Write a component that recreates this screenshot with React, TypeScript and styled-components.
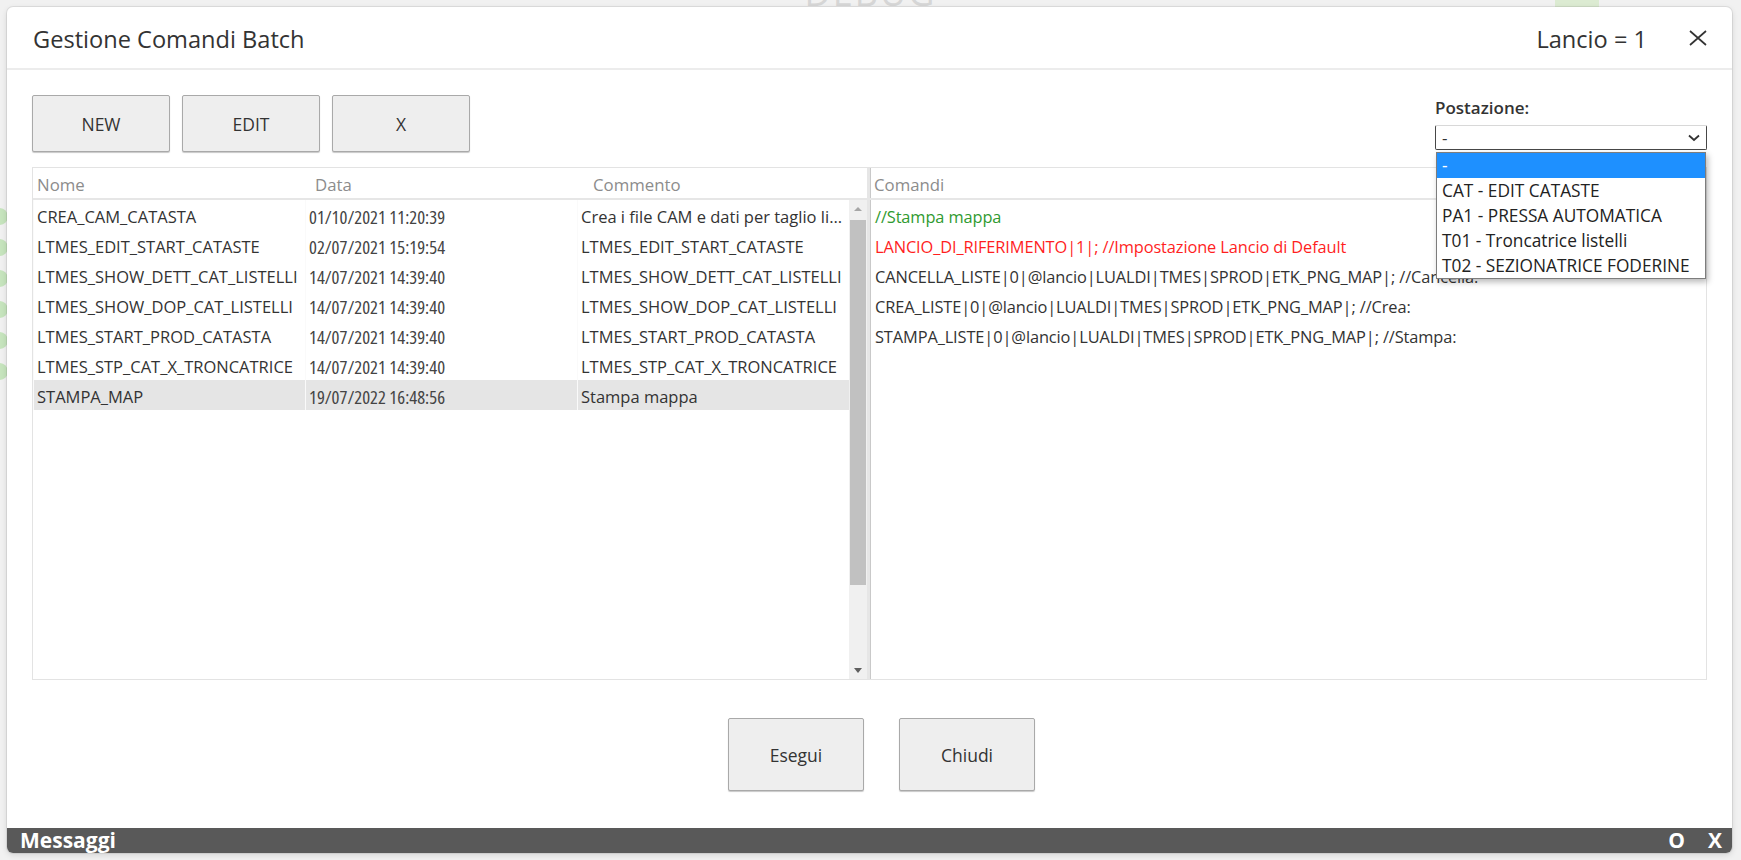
import React from 'react'
import styled, { createGlobalStyle } from 'styled-components'

const FONT = `"Open Sans", "Liberation Sans", Arial, sans-serif`

type Comando = { nome: string; data: string; commento: string }
type Riga = { testo: string; tipo: 'commento' | 'riferimento' | 'normale' }

const comandi: Comando[] = [
  { nome: 'CREA_CAM_CATASTA', data: '01/10/2021 11:20:39', commento: 'Crea i file CAM e dati per taglio listelli da catasta' },
  { nome: 'LTMES_EDIT_START_CATASTE', data: '02/07/2021 15:19:54', commento: 'LTMES_EDIT_START_CATASTE' },
  { nome: 'LTMES_SHOW_DETT_CAT_LISTELLI', data: '14/07/2021 14:39:40', commento: 'LTMES_SHOW_DETT_CAT_LISTELLI' },
  { nome: 'LTMES_SHOW_DOP_CAT_LISTELLI', data: '14/07/2021 14:39:40', commento: 'LTMES_SHOW_DOP_CAT_LISTELLI' },
  { nome: 'LTMES_START_PROD_CATASTA', data: '14/07/2021 14:39:40', commento: 'LTMES_START_PROD_CATASTA' },
  { nome: 'LTMES_STP_CAT_X_TRONCATRICE', data: '14/07/2021 14:39:40', commento: 'LTMES_STP_CAT_X_TRONCATRICE' },
  { nome: 'STAMPA_MAP', data: '19/07/2022 16:48:56', commento: 'Stampa mappa' },
]

const righe: Riga[] = [
  { testo: '//Stampa mappa', tipo: 'commento' },
  { testo: 'LANCIO_DI_RIFERIMENTO|1|; //Impostazione Lancio di Default', tipo: 'riferimento' },
  { testo: 'CANCELLA_LISTE|0|@lancio|LUALDI|TMES|SPROD|ETK_PNG_MAP|; //Cancella:', tipo: 'normale' },
  { testo: 'CREA_LISTE|0|@lancio|LUALDI|TMES|SPROD|ETK_PNG_MAP|; //Crea:', tipo: 'normale' },
  { testo: 'STAMPA_LISTE|0|@lancio|LUALDI|TMES|SPROD|ETK_PNG_MAP|; //Stampa:', tipo: 'normale' },
]

const postazioni = ['-', 'CAT - EDIT CATASTE', 'PA1 - PRESSA AUTOMATICA', 'T01 - Troncatrice listelli', 'T02 - SEZIONATRICE FODERINE']

const coloreRiga = { commento: '#2f9a2f', riferimento: '#ff1f1f', normale: '#333333' }

const App = () => {
  const selezionato = 6
  return (
    <>
      <GlobalStyle />
      <Page>
        <BackPage>
          <BackTop>
            <BackTitle>DEBUG</BackTitle>
            <BackBadge />
          </BackTop>
          <BackRail>
            {[0, 1, 2, 3, 4, 5].map((i) => (
              <BackDot key={i} />
            ))}
          </BackRail>
        </BackPage>

        <Modal>
          <Header>
            <Title>Gestione Comandi Batch</Title>
            <HeaderRight>
              <Title>Lancio = 1</Title>
              <CloseIcon width="18" height="16" viewBox="0 0 18 16">
                <path d="M1 1 L17 15 M17 1 L1 15" stroke="#333" strokeWidth="1.7" fill="none" />
              </CloseIcon>
            </HeaderRight>
          </Header>

          <Content>
            <Toolbar>
              <ButtonGroup>
                <ActionButton $w={138} $h={57}>NEW</ActionButton>
                <ActionButton $w={138} $h={57}>EDIT</ActionButton>
                <ActionButton $w={138} $h={57}>X</ActionButton>
              </ButtonGroup>
              <Postazione>
                <FieldLabel>Postazione:</FieldLabel>
                <SelectWrap>
                  <SelectBox>
                    <span>-</span>
                    <svg width="12" height="8" viewBox="0 0 12 8">
                      <path d="M1 1.5 L6 6 L11 1.5" stroke="#333" strokeWidth="1.8" fill="none" />
                    </svg>
                  </SelectBox>
                  <DropList>
                    {postazioni.map((p, i) => (
                      <DropOption key={p} $active={i === 0}>
                        {p}
                      </DropOption>
                    ))}
                  </DropList>
                </SelectWrap>
              </Postazione>
            </Toolbar>

            <Tables>
              <LeftPanel>
                <HeadRow $cols={3}>
                  <HeadCell>Nome</HeadCell>
                  <HeadCell>Data</HeadCell>
                  <HeadCell>Commento</HeadCell>
                </HeadRow>
                <ListBody>
                  <Rows>
                    {comandi.map((c, i) => (
                      <Row key={c.nome} $selected={i === selezionato}>
                        <Cell>{c.nome}</Cell>
                        <Cell $numeric>{c.data}</Cell>
                        <Cell>{c.commento}</Cell>
                      </Row>
                    ))}
                  </Rows>
                  <ScrollBar>
                    <ArrowBox>
                      <ArrowUp />
                    </ArrowBox>
                    <Thumb />
                    <ArrowBox>
                      <ArrowDown />
                    </ArrowBox>
                  </ScrollBar>
                </ListBody>
              </LeftPanel>

              <RightPanel>
                <HeadRow $cols={1}>
                  <HeadCell>Comandi</HeadCell>
                </HeadRow>
                {righe.map((r) => (
                  <CommandLine key={r.testo} $color={coloreRiga[r.tipo]}>
                    {r.testo}
                  </CommandLine>
                ))}
              </RightPanel>
            </Tables>

            <Footer>
              <ActionButton $w={136} $h={73}>Esegui</ActionButton>
              <ActionButton $w={136} $h={73}>Chiudi</ActionButton>
            </Footer>
          </Content>

          <MessageBar>
            <span>Messaggi</span>
            <MessageActions>
              <span>O</span>
              <span>X</span>
            </MessageActions>
          </MessageBar>
        </Modal>
      </Page>
    </>
  )
}

const GlobalStyle = createGlobalStyle`
  html, body {
    margin: 0;
    padding: 0;
  }
  body {
    background: #f1f1f1;
    font-family: ${FONT};
    font-weight: 400;
    color: #333;
    overflow: hidden;
  }
  * {
    box-sizing: border-box;
  }
`

const Page = styled.div`
  position: relative;
  width: 100%;
  height: 860px;
  overflow: hidden;
`

const BackPage = styled.div`
  display: flex;
  flex-direction: column;
  height: 100%;
`

const BackTop = styled.div`
  display: flex;
  justify-content: center;
  position: relative;
  height: 10px;
`

const BackTitle = styled.div`
  font-size: 36px;
  line-height: 40px;
  margin-top: -27px;
  color: #d6d6d6;
  letter-spacing: 2px;
`

const BackBadge = styled.div`
  position: absolute;
  left: 1555px;
  top: 0;
  width: 44px;
  height: 8px;
  background: #dcebd2;
`

const BackRail = styled.div`
  display: flex;
  flex-direction: column;
  gap: 14px;
  margin-top: 198px;
`

const BackDot = styled.div`
  width: 17px;
  height: 17px;
  border-radius: 50%;
  margin-left: -9px;
  background: #c6e4bd;
`

const Modal = styled.div`
  position: absolute;
  left: 7px;
  top: 7px;
  width: 1725px;
  height: 846px;
  background: #fff;
  border-radius: 6px;
  box-shadow: 0 0 0 1px rgba(0, 0, 0, 0.07), 0 2px 6px rgba(0, 0, 0, 0.12);
  display: flex;
  flex-direction: column;
`

const Header = styled.header`
  flex-shrink: 0;
  height: 63px;
  display: flex;
  align-items: center;
  justify-content: space-between;
  padding: 3px 25px 0 26px;
  border-bottom: 2px solid #ececec;
`

const Title = styled.h1`
  margin: 0;
  font-size: 23.6px;
  font-weight: 400;
  color: #333;
  white-space: nowrap;
`

const HeaderRight = styled.div`
  display: flex;
  align-items: center;
  gap: 42px;
`

const CloseIcon = styled.svg`
  display: block;
  margin-top: -2px;
`

const Content = styled.div`
  flex: 1;
  display: flex;
  flex-direction: column;
  padding: 0 25px;
`

const Toolbar = styled.div`
  display: flex;
  justify-content: space-between;
  align-items: flex-start;
  margin-top: 25px;
`

const ButtonGroup = styled.div`
  display: flex;
  gap: 12px;
`

const ActionButton = styled.button<{ $w: number; $h: number }>`
  width: ${(p) => p.$w}px;
  height: ${(p) => p.$h}px;
  padding: 0;
  background: #eeeeee;
  border: 1px solid #a9a9a9;
  border-radius: 2px;
  box-shadow: 0 1px 1px rgba(0, 0, 0, 0.22);
  font-family: inherit;
  font-weight: inherit;
  font-size: 17.5px;
  color: #333;
`

const Postazione = styled.div`
  width: 272px;
  display: flex;
  flex-direction: column;
  margin-top: 2px;
`

const FieldLabel = styled.label`
  font-size: 17px;
  line-height: 22px;
  font-weight: 600;
  color: #333;
`

const SelectWrap = styled.div`
  position: relative;
  margin-top: 6px;
`

const SelectBox = styled.div`
  height: 25px;
  display: flex;
  align-items: center;
  justify-content: space-between;
  padding: 0 6px 0 6px;
  border: 1px solid #474747;
  border-top-color: #d8d8d8;
  border-radius: 2px;
  font-size: 17px;
  color: #333;
`

const DropList = styled.div`
  position: absolute;
  top: calc(100% + 2px);
  left: 1px;
  right: 1px;
  z-index: 10;
  background: #fff;
  border: 1px solid #7d7d7d;
  box-shadow: 2px 3px 6px rgba(0, 0, 0, 0.28);
`

const DropOption = styled.div<{ $active: boolean }>`
  height: 25px;
  line-height: 25px;
  padding-left: 5px;
  font-size: 17.3px;
  white-space: nowrap;
  background: ${(p) => (p.$active ? '#1e90ff' : '#fff')};
  color: ${(p) => (p.$active ? '#fff' : '#222')};
`

const Tables = styled.div`
  margin-top: 15px;
  height: 513px;
  display: grid;
  grid-template-columns: 834px 1fr;
  border: 1px solid #e3e3e3;
  background: #fff;
`

const LeftPanel = styled.div`
  display: flex;
  flex-direction: column;
  min-height: 0;
  overflow: hidden;
`

const HeadRow = styled.div<{ $cols: number }>`
  flex-shrink: 0;
  display: grid;
  grid-template-columns: repeat(${(p) => p.$cols}, 1fr);
  height: 32px;
  border-bottom: 2px solid #e6e6e6;
`

const HeadCell = styled.div`
  padding: 4px 0 0 4px;
  line-height: 26px;
  font-size: 16.8px;
  color: #8c8c8c;
`

const ListBody = styled.div`
  flex: 1;
  display: flex;
  min-height: 0;
`

const Rows = styled.div`
  flex: 1;
  min-width: 0;
`

const Row = styled.div<{ $selected: boolean }>`
  display: grid;
  grid-template-columns: repeat(3, 1fr);
  height: 30px;
  background: ${(p) => (p.$selected ? '#e5e5e5' : 'transparent')};
`

const Cell = styled.div<{ $numeric?: boolean }>`
  border-left: 1px solid #fafafa;
  padding: 4px 4px 0 3px;
  line-height: 26px;
  font-size: ${(p) => (p.$numeric ? '18.6px' : '16.5px')};
  font-stretch: ${(p) => (p.$numeric ? 'condensed' : 'normal')};
  color: ${(p) => (p.$numeric ? '#444' : '#333')};
  white-space: nowrap;
  overflow: hidden;
  text-overflow: ellipsis;
`

const ScrollBar = styled.div`
  width: 18px;
  flex-shrink: 0;
  display: flex;
  flex-direction: column;
  background: #f0f0f0;
`

const ArrowBox = styled.div`
  height: 17px;
  display: flex;
  align-items: center;
  justify-content: center;
  &:last-child {
    margin-top: auto;
  }
`

const ArrowUp = styled.div`
  width: 0;
  height: 0;
  border-left: 4px solid transparent;
  border-right: 4px solid transparent;
  border-bottom: 4px solid #a6a6a6;
`

const ArrowDown = styled.div`
  width: 0;
  height: 0;
  border-left: 4px solid transparent;
  border-right: 4px solid transparent;
  border-top: 5px solid #5f5f5f;
`

const Thumb = styled.div`
  margin: 3px 1px 0 1px;
  height: 365px;
  background: #c1c1c1;
`

const RightPanel = styled.div`
  display: flex;
  flex-direction: column;
  border-left: 3px solid #e6e6e6;
  box-shadow: inset 1px 0 0 #c9c9c9;
  min-width: 0;
  overflow: hidden;
`

const CommandLine = styled.div<{ $color: string }>`
  height: 30px;
  padding: 4px 0 0 5px;
  line-height: 26px;
  font-size: 16.4px;
  letter-spacing: -0.12px;
  color: ${(p) => p.$color};
  white-space: nowrap;
`

const Footer = styled.div`
  display: flex;
  justify-content: center;
  gap: 35px;
  padding: 38px 0 37px 24px;
`

const MessageBar = styled.div`
  flex-shrink: 0;
  height: 25px;
  display: flex;
  align-items: center;
  justify-content: space-between;
  padding: 0 10px 0 13px;
  background: #595959;
  border-radius: 0 0 6px 6px;
  color: #fff;
  font-size: 21px;
  font-weight: 700;
  line-height: 25px;
`

const MessageActions = styled.div`
  display: flex;
  gap: 23px;
`

export default App
